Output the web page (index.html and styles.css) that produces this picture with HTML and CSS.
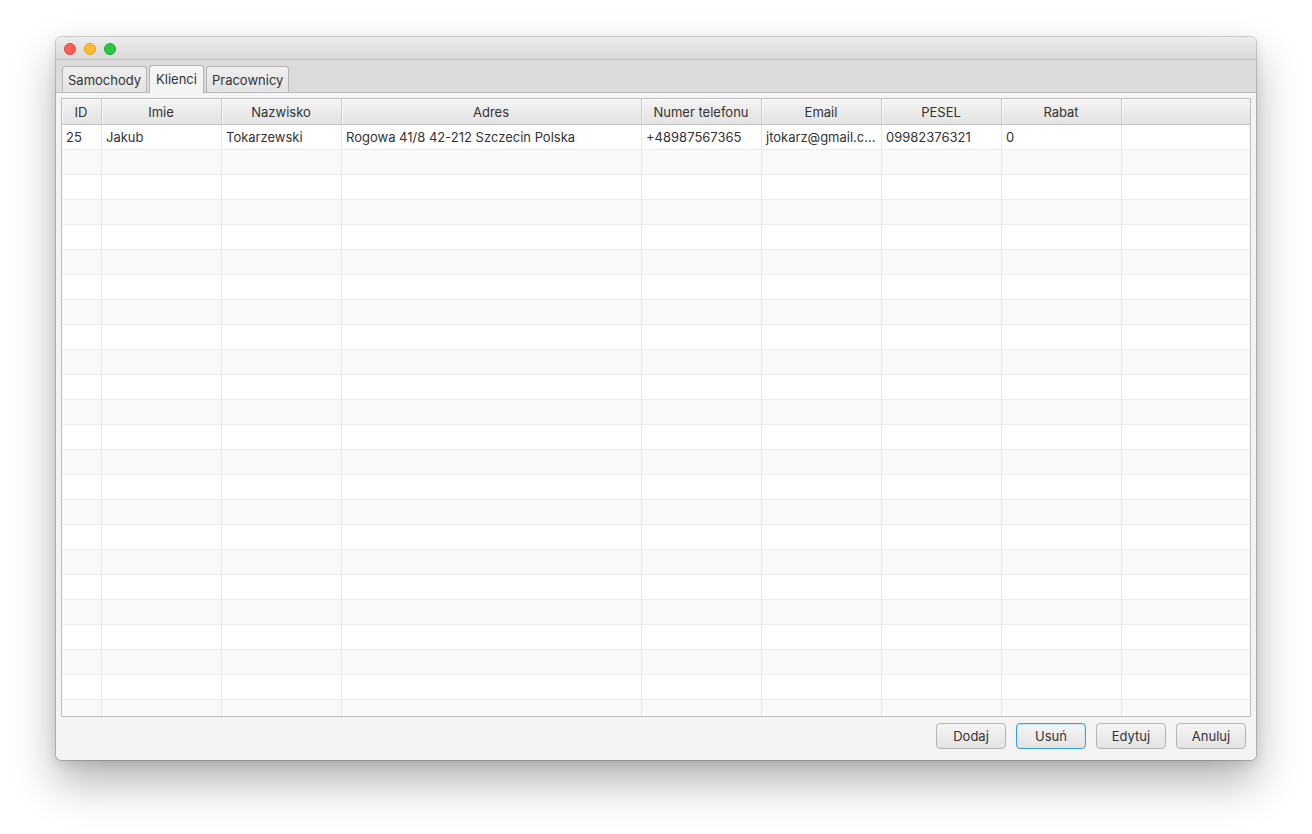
FILE: index.html
```html
<!DOCTYPE html>
<html lang="pl">
<head>
<meta charset="utf-8">
<title>Klienci</title>
<link rel="stylesheet" href="styles.css">
</head>
<body>
<div class="stage">
  <div class="window">
    <div class="titlebar">
      <span class="light red"></span>
      <span class="light yellow"></span>
      <span class="light green"></span>
    </div>
    <div class="tabbar">
      <div class="tab">Samochody</div>
      <div class="tab active">Klienci</div>
      <div class="tab">Pracownicy</div>
    </div>
    <div class="content">
      <div class="table">
        <div class="row head">
          <div class="c">ID</div><div class="c">Imie</div><div class="c">Nazwisko</div><div class="c">Adres</div><div class="c">Numer telefonu</div><div class="c">Email</div><div class="c">PESEL</div><div class="c">Rabat</div><div class="c filler"></div>
        </div>
        <div class="body">
          <div class="row">
            <div class="c">25</div><div class="c">Jakub</div><div class="c">Tokarzewski</div><div class="c">Rogowa 41/8 42-212 Szczecin Polska</div><div class="c">+48987567365</div><div class="c">jtokarz@gmail.c...</div><div class="c">09982376321</div><div class="c">0</div><div class="c filler"></div>
          </div>
          <div class="row alt"><div class="c"></div><div class="c"></div><div class="c"></div><div class="c"></div><div class="c"></div><div class="c"></div><div class="c"></div><div class="c"></div><div class="c filler"></div></div>
          <div class="row"><div class="c"></div><div class="c"></div><div class="c"></div><div class="c"></div><div class="c"></div><div class="c"></div><div class="c"></div><div class="c"></div><div class="c filler"></div></div>
          <div class="row alt"><div class="c"></div><div class="c"></div><div class="c"></div><div class="c"></div><div class="c"></div><div class="c"></div><div class="c"></div><div class="c"></div><div class="c filler"></div></div>
          <div class="row"><div class="c"></div><div class="c"></div><div class="c"></div><div class="c"></div><div class="c"></div><div class="c"></div><div class="c"></div><div class="c"></div><div class="c filler"></div></div>
          <div class="row alt"><div class="c"></div><div class="c"></div><div class="c"></div><div class="c"></div><div class="c"></div><div class="c"></div><div class="c"></div><div class="c"></div><div class="c filler"></div></div>
          <div class="row"><div class="c"></div><div class="c"></div><div class="c"></div><div class="c"></div><div class="c"></div><div class="c"></div><div class="c"></div><div class="c"></div><div class="c filler"></div></div>
          <div class="row alt"><div class="c"></div><div class="c"></div><div class="c"></div><div class="c"></div><div class="c"></div><div class="c"></div><div class="c"></div><div class="c"></div><div class="c filler"></div></div>
          <div class="row"><div class="c"></div><div class="c"></div><div class="c"></div><div class="c"></div><div class="c"></div><div class="c"></div><div class="c"></div><div class="c"></div><div class="c filler"></div></div>
          <div class="row alt"><div class="c"></div><div class="c"></div><div class="c"></div><div class="c"></div><div class="c"></div><div class="c"></div><div class="c"></div><div class="c"></div><div class="c filler"></div></div>
          <div class="row"><div class="c"></div><div class="c"></div><div class="c"></div><div class="c"></div><div class="c"></div><div class="c"></div><div class="c"></div><div class="c"></div><div class="c filler"></div></div>
          <div class="row alt"><div class="c"></div><div class="c"></div><div class="c"></div><div class="c"></div><div class="c"></div><div class="c"></div><div class="c"></div><div class="c"></div><div class="c filler"></div></div>
          <div class="row"><div class="c"></div><div class="c"></div><div class="c"></div><div class="c"></div><div class="c"></div><div class="c"></div><div class="c"></div><div class="c"></div><div class="c filler"></div></div>
          <div class="row alt"><div class="c"></div><div class="c"></div><div class="c"></div><div class="c"></div><div class="c"></div><div class="c"></div><div class="c"></div><div class="c"></div><div class="c filler"></div></div>
          <div class="row"><div class="c"></div><div class="c"></div><div class="c"></div><div class="c"></div><div class="c"></div><div class="c"></div><div class="c"></div><div class="c"></div><div class="c filler"></div></div>
          <div class="row alt"><div class="c"></div><div class="c"></div><div class="c"></div><div class="c"></div><div class="c"></div><div class="c"></div><div class="c"></div><div class="c"></div><div class="c filler"></div></div>
          <div class="row"><div class="c"></div><div class="c"></div><div class="c"></div><div class="c"></div><div class="c"></div><div class="c"></div><div class="c"></div><div class="c"></div><div class="c filler"></div></div>
          <div class="row alt"><div class="c"></div><div class="c"></div><div class="c"></div><div class="c"></div><div class="c"></div><div class="c"></div><div class="c"></div><div class="c"></div><div class="c filler"></div></div>
          <div class="row"><div class="c"></div><div class="c"></div><div class="c"></div><div class="c"></div><div class="c"></div><div class="c"></div><div class="c"></div><div class="c"></div><div class="c filler"></div></div>
          <div class="row alt"><div class="c"></div><div class="c"></div><div class="c"></div><div class="c"></div><div class="c"></div><div class="c"></div><div class="c"></div><div class="c"></div><div class="c filler"></div></div>
          <div class="row"><div class="c"></div><div class="c"></div><div class="c"></div><div class="c"></div><div class="c"></div><div class="c"></div><div class="c"></div><div class="c"></div><div class="c filler"></div></div>
          <div class="row alt"><div class="c"></div><div class="c"></div><div class="c"></div><div class="c"></div><div class="c"></div><div class="c"></div><div class="c"></div><div class="c"></div><div class="c filler"></div></div>
          <div class="row"><div class="c"></div><div class="c"></div><div class="c"></div><div class="c"></div><div class="c"></div><div class="c"></div><div class="c"></div><div class="c"></div><div class="c filler"></div></div>
          <div class="row alt"><div class="c"></div><div class="c"></div><div class="c"></div><div class="c"></div><div class="c"></div><div class="c"></div><div class="c"></div><div class="c"></div><div class="c filler"></div></div>
        </div>
      </div>
    </div>
    <div class="buttons">
      <button class="btn">Dodaj</button>
      <button class="btn focused">Usuń</button>
      <button class="btn">Edytuj</button>
      <button class="btn">Anuluj</button>
    </div>
  </div>
</div>
</body>
</html>
```
FILE: styles.css
```css
html, body {
  margin: 0;
  padding: 0;
  background: #ffffff;
  height: 100%;
  overflow: hidden;
}

body {
  font-family: Inter, "Noto Sans", "Liberation Sans", sans-serif;
  font-size: 13px;
  color: #333333;
}

.stage {
  padding: 37px 0 0 56px;
}

.window {
  width: 1200px;
  height: 723px;
  display: flex;
  flex-direction: column;
  background: #f4f4f4;
  border-radius: 5px;
  overflow: hidden;
  box-shadow: 0 0 0 1px rgba(0, 0, 0, 0.16), 0 22px 45px rgba(0, 0, 0, 0.30), 0 4px 12px rgba(0, 0, 0, 0.10);
}

.titlebar {
  height: 22px;
  flex: none;
  display: flex;
  align-items: center;
  gap: 8px;
  padding: 0 0 0 8px;
  background: linear-gradient(#ececec, #d9d9d9);
  border-bottom: 1px solid #bdbdbd;
}

.light {
  width: 12px;
  height: 12px;
  margin-top: 2px;
  border-radius: 50%;
  box-sizing: border-box;
}
.red { background: #fe5f57; border: 1px solid #e2463f; }
.yellow { background: #febc2e; border: 1px solid #dea123; }
.green { background: #28c840; border: 1px solid #1aab29; }

.tabbar {
  height: 32px;
  flex: none;
  display: flex;
  align-items: flex-end;
  gap: 2px;
  padding-left: 6px;
  background: #dcdcdc;
  border-bottom: 1px solid #b9b9b9;
}

.tab {
  height: 26px;
  box-sizing: border-box;
  padding: 0 5px;
  display: flex;
  align-items: center;
  border: 1px solid #b5b5b5;
  border-bottom: none;
  border-radius: 3px 3px 0 0;
  background: linear-gradient(#efefef, #e3e3e3);
  color: #333333;
}

.tab.active {
  height: 28px;
  margin-bottom: -1px;
  padding: 0 6px 2px 6px;
  background: #f4f4f4;
}

.content {
  flex: none;
  padding: 5px 5px 0 5px;
}

.table {
  height: 619px;
  box-sizing: border-box;
  border: 1px solid #bdbdbd;
  background: #ffffff;
  overflow: hidden;
}

.row {
  display: grid;
  grid-template-columns: 40px 120px 120px 300px 120px 120px 120px 120px 1fr;
  height: 25px;
  box-sizing: border-box;
  border-bottom: 1px solid #ececec;
  background: #ffffff;
}

.row.alt {
  background: #f9f9f9;
}

.c {
  box-sizing: border-box;
  border-right: 1px solid #e8e8e8;
  padding: 0 5px 0 4px;
  display: flex;
  align-items: center;
  white-space: nowrap;
  overflow: hidden;
  color: #333333;
}

.c.filler {
  border-right: none;
}

.row.head {
  height: 26px;
  border-bottom: 1px solid #c4c4c4;
  background: linear-gradient(#f4f4f4, #e3e3e3);
}

.row.head .c {
  justify-content: center;
  border-right: 1px solid #cbcbcb;
  box-shadow: inset 1px 1px 0 #f9f9f9;
}

.row.head .c.filler {
  border-right: none;
}

.buttons {
  flex: none;
  display: flex;
  justify-content: flex-end;
  gap: 10px;
  padding: 6px 10px 0 0;
}

.btn {
  width: 70px;
  height: 26px;
  box-sizing: border-box;
  border: 1px solid #b4b4b4;
  border-radius: 4px;
  background: linear-gradient(#f5f5f5, #e3e3e3);
  font-family: Inter, "Noto Sans", "Liberation Sans", sans-serif;
  font-size: 13px;
  color: #333333;
  padding: 0;
  margin: 0;
}

.btn.focused {
  border: 1px solid #3a9ee2;
  box-shadow: inset 0 0 0 1px #cde6f7;
}
```
